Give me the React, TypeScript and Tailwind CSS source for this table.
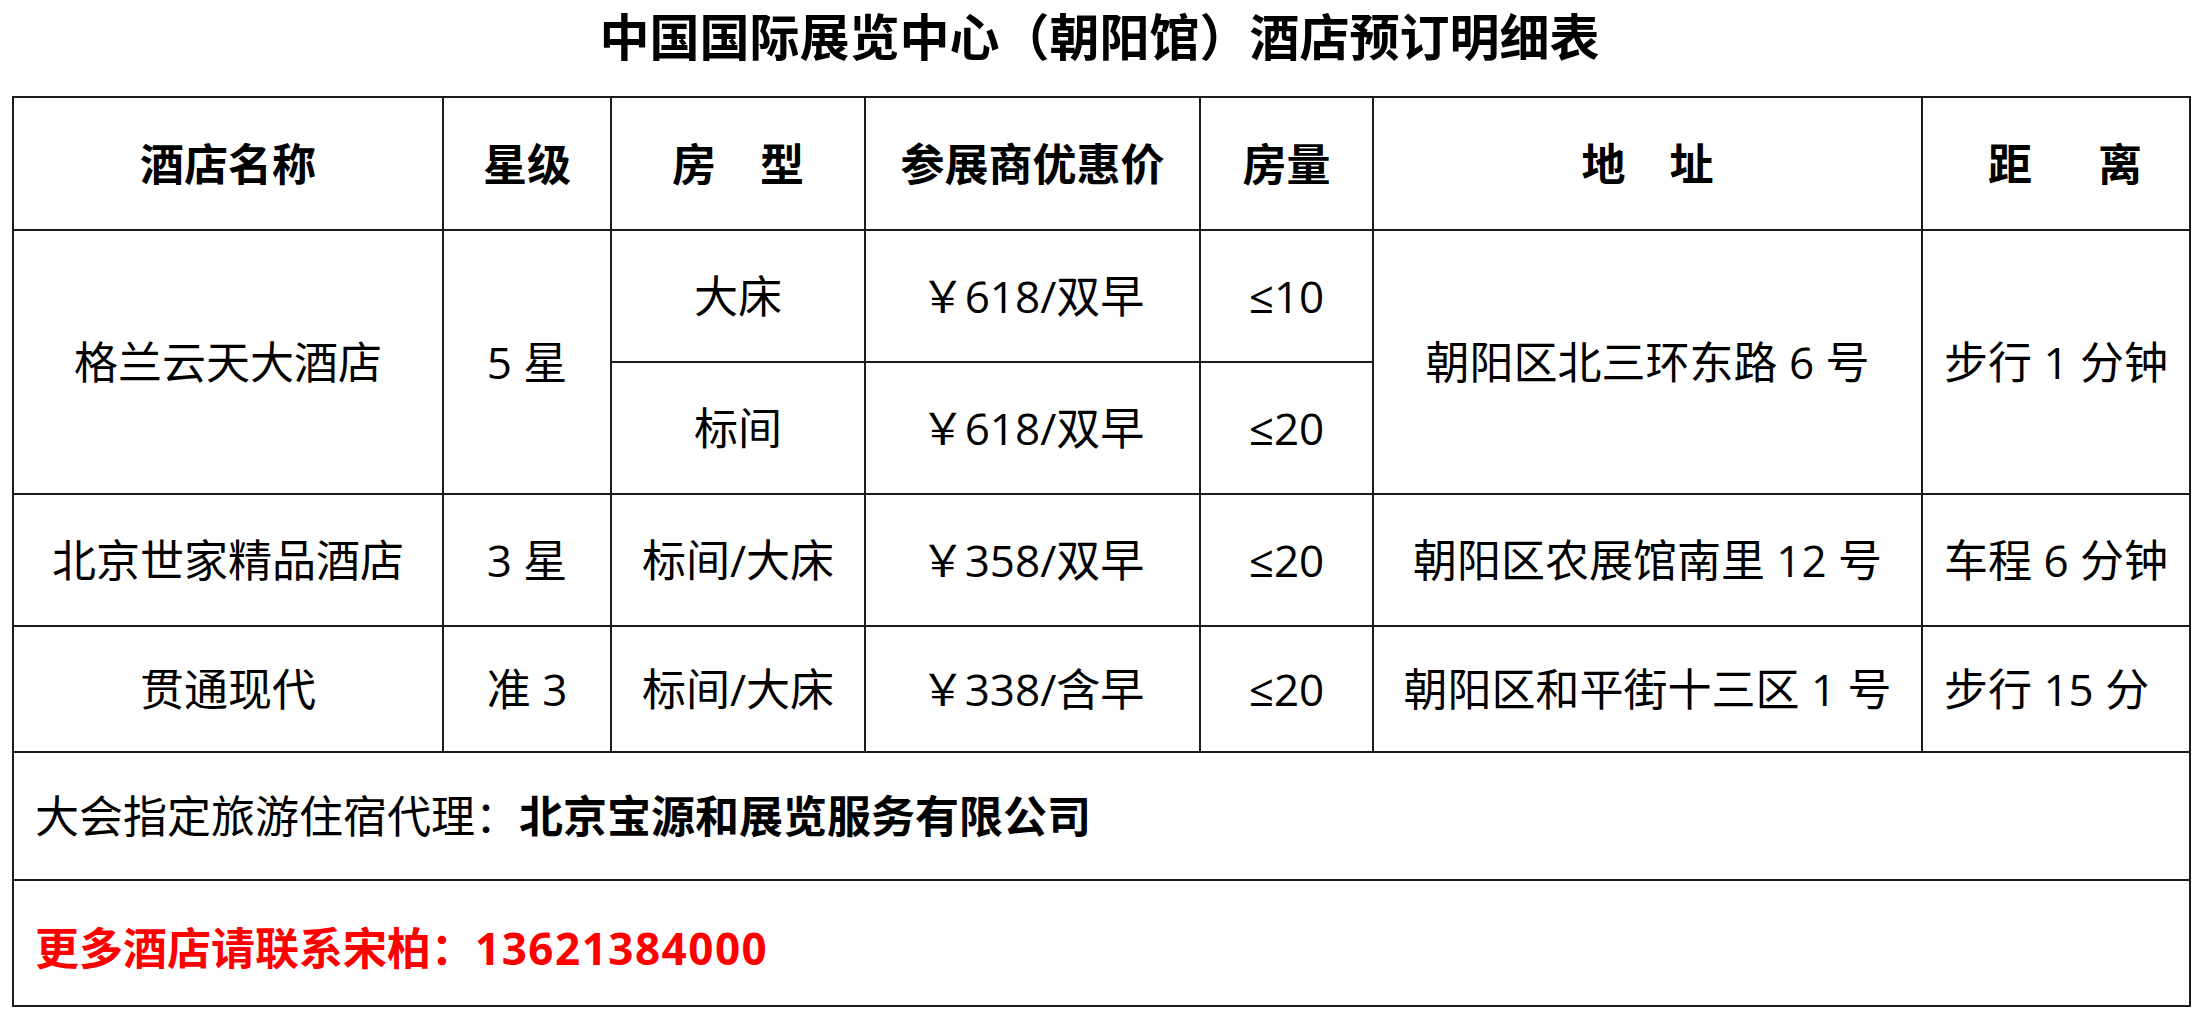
import React from "react";

const cell = "bg-white flex items-center justify-center text-black leading-none whitespace-nowrap";

export default function App() {
  return (
    <div className="w-[2199px] h-[1017px] bg-white [font-family:'Open_Sans','Noto_Sans_CJK_SC',sans-serif] text-black">
      <div className="h-[96px] pt-[9px] text-center text-[50px] font-bold leading-none [font-family:'Noto_Sans_CJK_SC',sans-serif]">
        中国国际展览中心（朝阳馆）酒店预订明细表
      </div>
      <div className="ml-[12px] w-[2179px] grid grid-cols-[428px_166px_252px_333px_171px_547px_266px] grid-rows-[131px_130px_130px_130px_124px_126px_124px] gap-[2px] p-[2px] bg-[#1c1c1c] text-[44px]">
        {/* header */}
        <div className={`${cell} font-bold`}>酒店名称</div>
        <div className={`${cell} font-bold`}>星级</div>
        <div className={`${cell} font-bold`}>房　型</div>
        <div className={`${cell} font-bold`}>参展商优惠价</div>
        <div className={`${cell} font-bold`}>房量</div>
        <div className={`${cell} font-bold`}>地　址</div>
        <div className={`${cell} font-bold pl-[18px]`}>
          距<span className="inline-block w-[66px]" />离
        </div>

        {/* row 1 */}
        <div className={`${cell} row-span-2`}>格兰云天大酒店</div>
        <div className={`${cell} row-span-2`}>5 星</div>
        <div className={cell}>大床</div>
        <div className={cell}>￥618/双早</div>
        <div className={cell}>≤10</div>
        <div className={`${cell} row-span-2`}>朝阳区北三环东路 6 号</div>
        <div className={`${cell} row-span-2`}>步行 1 分钟</div>
        <div className={cell}>标间</div>
        <div className={cell}>￥618/双早</div>
        <div className={cell}>≤20</div>

        {/* row 2 */}
        <div className={cell}>北京世家精品酒店</div>
        <div className={cell}>3 星</div>
        <div className={cell}>标间/大床</div>
        <div className={cell}>￥358/双早</div>
        <div className={cell}>≤20</div>
        <div className={cell}>朝阳区农展馆南里 12 号</div>
        <div className={cell}>车程 6 分钟</div>

        {/* row 3 */}
        <div className={cell}>贯通现代</div>
        <div className={cell}>准 3</div>
        <div className={cell}>标间/大床</div>
        <div className={cell}>￥338/含早</div>
        <div className={cell}>≤20</div>
        <div className={cell}>朝阳区和平街十三区 1 号</div>
        <div className={`${cell} justify-start pl-[21px]`}>步行 15 分</div>

        {/* agent */}
        <div className="col-span-7 bg-white flex items-center pl-[21px] leading-none whitespace-nowrap">
          <span>大会指定旅游住宿代理：</span>
          <span className="font-bold">北京宝源和展览服务有限公司</span>
        </div>

        {/* contact */}
        <div className="col-span-7 bg-white flex items-center pl-[21px] pt-[10px] leading-none whitespace-nowrap font-bold text-[#ff0000]">
          <span>更多酒店请联系宋柏：</span>
          <span className="tracking-[1.5px]">13621384000</span>
        </div>
      </div>
    </div>
  );
}
